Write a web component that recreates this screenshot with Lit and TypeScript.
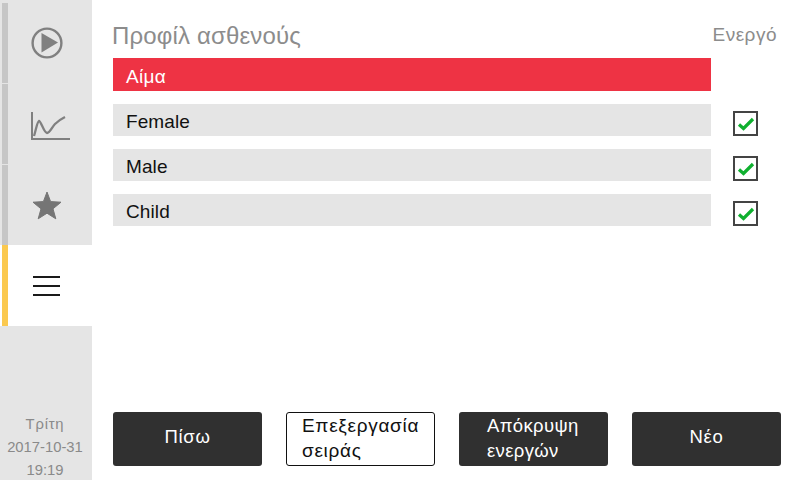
import { LitElement, html, css, svg } from "lit";
import { customElement } from "lit/decorators.js";

const play = svg`<svg class="icon" width="32" height="32" viewBox="0 0 32 32"><circle cx="16" cy="16" r="14.4" fill="none" stroke="#808080" stroke-width="2.4"/><path d="M10.5 6 L27 15.5 L10.5 25.5 Z" fill="#808080"/></svg>`;
const chart = svg`<svg class="icon shift" width="39" height="28" viewBox="0 0 39 28"><path d="M1 0 V27 H39" fill="none" stroke="#808080" stroke-width="2"/><path d="M3 24 C5 18 6 10 8 9 C10 9 13 21 16 21 C19 21 21 15 24 12 C27 9 30 7 34 5" fill="none" stroke="#808080" stroke-width="2.3"/></svg>`;
const star = svg`<svg class="icon" width="30" height="29" viewBox="0 0 30 29"><path d="M15 1 L18.6 10.6 L29 11.2 L21 17.8 L23.8 27.8 L15 22.2 L6.2 27.8 L9 17.8 L1 11.2 L11.4 10.6 Z" fill="#757575" stroke="#757575" stroke-width="1" stroke-linejoin="round"/></svg>`;
const menu = svg`<svg class="icon" width="27" height="22" viewBox="0 0 27 22"><path d="M0 2 H27 M0 11 H27 M0 20 H27" stroke="#1a1a1a" stroke-width="2"/></svg>`;
const check = svg`<svg width="18" height="14" viewBox="0 0 18 14"><path d="M2 7.5 L6.5 11.5 L16 2" fill="none" stroke="#0fb02f" stroke-width="3.2"/></svg>`;

@customElement("app-root")
export class AppRoot extends LitElement {
  static styles = css`
    :host { display: block; width: 800px; height: 480px; background: #fff; font-family: "Liberation Sans", Arial, sans-serif; overflow: hidden; }
    .page { display: flex; width: 800px; height: 480px; }
    .side { width: 92px; flex: none; background: #e5e5e5; display: flex; flex-direction: column; }
    .nav { display: flex; flex-direction: column; gap: 1px; padding-top: 3px; }
    .item { height: 80px; display: flex; align-items: center; }
    .bar { width: 6px; height: 100%; margin-left: 2px; background: #c6c6c6; flex: none; }
    .item.active { background: #fff; height: 81px; margin-top: -1px; }
    .item.active .bar { background: #fbc94f; }
    .slot { flex: 1; display: flex; justify-content: center; align-items: center; padding-right: 7px; }
    .shift { margin-left: 7px; margin-top: 4px; }
    .date { margin-top: auto; text-align: center; color: #8a8a8a; font-size: 14.8px; line-height: 23px; height: 70px; box-sizing: border-box; padding: 3px 2px 0 0; }
    .day { letter-spacing: 0.8px; }
    .main { flex: 1; display: flex; flex-direction: column; padding: 0 19px 14px 21px; min-width: 0; }
    .head { display: flex; justify-content: space-between; height: 58px; color: #8c8c8c; }
    .title { font-size: 24px; line-height: 26px; padding-top: 23px; letter-spacing: 0.15px; margin-left: -1px; }
    .state { font-size: 19px; line-height: 22px; padding-top: 24px; letter-spacing: 0.5px; margin-right: 4px; }
    .rows { display: flex; flex-direction: column; gap: 13px; }
    .row { display: flex; align-items: flex-start; height: 32px; }
    .row.top { height: 33px; }
    .label { width: 598px; height: 100%; flex: none; background: #e5e5e5; box-sizing: border-box; padding-left: 13px; font-size: 19px; line-height: 36px; letter-spacing: 0.1px; color: #111; }
    .label.sel { background: #ee3344; color: #fff; letter-spacing: 0.3px; line-height: 38px; }
    .box { width: 21px; height: 21px; border: 2px solid #444; margin-left: 22px; margin-top: 7px; display: flex; align-items: center; justify-content: center; }
    .actions { margin-top: auto; display: flex; justify-content: space-between; }
    button { width: 149px; height: 54px; box-sizing: border-box; border-radius: 3px; font: inherit; font-size: 18.5px; line-height: 25px; letter-spacing: 0.35px; padding: 0 0 2px; cursor: pointer; }
    button.dark { background: #303030; color: #fff; border: none; }
    button.light { background: #fff; color: #111; border: 1px solid #111; font-size: 19px; letter-spacing: 0.7px; }
    button.one { padding-bottom: 6px; letter-spacing: 0.7px; }
    button.wrap { text-align: left; padding-left: 28px; padding-right: 0; white-space: nowrap; }
    button.light.wrap { padding-left: 15px; }
  `;

  render() {
    const rows = ["Female", "Male", "Child"];
    return html`<div class="page">
      <aside class="side">
        <nav class="nav">
          ${[play, chart, star].map((i) => html`<div class="item"><div class="bar"></div><div class="slot">${i}</div></div>`)}
          <div class="item active"><div class="bar"></div><div class="slot">${menu}</div></div>
        </nav>
        <div class="date"><div class="day">Τρίτη</div><div>2017-10-31</div><div>19:19</div></div>
      </aside>
      <main class="main">
        <header class="head"><div class="title">Προφίλ ασθενούς</div><div class="state">Ενεργό</div></header>
        <div class="rows">
          <div class="row top"><div class="label sel">Αίμα</div></div>
          ${rows.map((r) => html`<div class="row"><div class="label">${r}</div><div class="box">${check}</div></div>`)}
        </div>
        <div class="actions">
          <button class="dark one">Πίσω</button>
          <button class="light wrap">Επεξεργασία<br />σειράς</button>
          <button class="dark wrap">Απόκρυψη<br />ενεργών</button>
          <button class="dark one">Νέο</button>
        </div>
      </main>
    </div>`;
  }
}
